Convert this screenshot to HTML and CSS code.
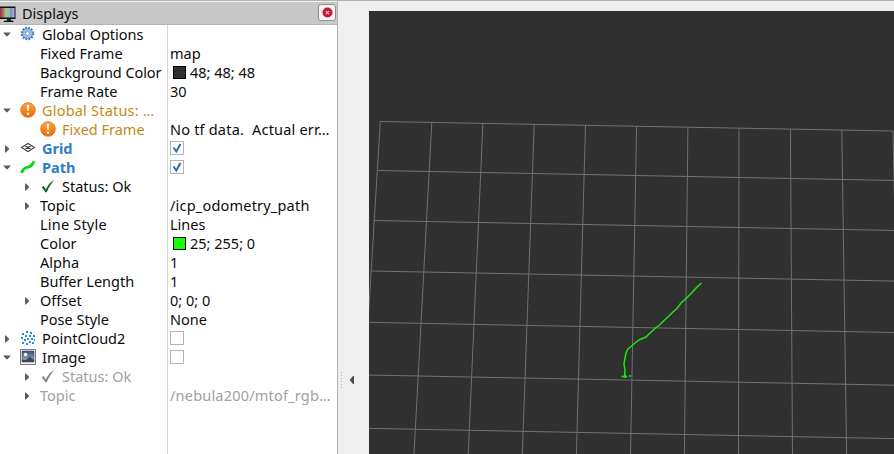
FILE: index.html
```html
<!DOCTYPE html>
<html lang="en">
<head>
<meta charset="utf-8">
<title>Displays</title>
<link rel="stylesheet" href="styles.css">
</head>
<body>
<svg class="defs" width="0" height="0">
  <defs>
    <linearGradient id="orange" x1="0" y1="0" x2="0" y2="1"><stop offset="0" stop-color="#ffa552"/><stop offset=".5" stop-color="#f58a20"/><stop offset="1" stop-color="#e8690b"/></linearGradient>
    <linearGradient id="red" x1="0" y1="0" x2="1" y2="0"><stop offset="0" stop-color="#8f3338"/><stop offset="1" stop-color="#c98a8c"/></linearGradient>
    <linearGradient id="blue" x1="0" y1="0" x2="1" y2="0"><stop offset="0" stop-color="#7d80d0"/><stop offset="1" stop-color="#b4b6ee"/></linearGradient>
    <linearGradient id="sky" x1="0" y1="0" x2="0" y2="1"><stop offset="0" stop-color="#364f80"/><stop offset="1" stop-color="#a2b6d8"/></linearGradient>
    <symbol id="down" viewBox="0 0 8 5"><path d="M.5.5h7v.6L4.500 4.200h-1L.5 1.100z" fill="#5c5c5c"/></symbol>
    <symbol id="right" viewBox="0 0 5 8"><path d="M0 .5h.8L4 3.500v1L.8 7.500H0z" fill="#5c5c5c"/></symbol>
    <symbol id="warn" viewBox="0 0 16 16"><circle cx="8" cy="8" r="7.300" fill="url(#orange)" stroke="#dc6b12" stroke-width=".8"/><path d="M6.900 3h2.200l-.4 6H7.300z" fill="#fff"/><circle cx="8" cy="11.700" r="1.200" fill="#fff"/></symbol>
    <symbol id="tick" viewBox="0 0 14 14"><path d="M.5 8.200 2.700 7l2.100 3.200C7 5.700 9.600 2.700 13.500.7 10 4.600 7.700 8.300 5.800 13.300H4.200C3.300 11.200 2 9.600.5 8.200z" fill="currentColor"/></symbol>
  </defs>
</svg>
<main class="window">
  <section class="panel">
    <header class="title">
      <svg class="monitor" width="16" height="17" viewBox="0 0 16 17"><path d="M0 .5h15.500v12.500H0z" fill="#111"/><path d="M0 2h5v9.500H0z" fill="url(#red)"/><path d="M5 2h5v9.500H5z" fill="#8ec793"/><path d="M10 2h4.500v9.500H10z" fill="url(#blue)"/><path d="M7 13h4v2H7z" fill="#333"/><path d="M5 14.500h7.500L14 16H3z" fill="#111"/></svg>
      <h1>Displays</h1>
      <button class="close" aria-label="Close"><svg width="11" height="11" viewBox="0 0 11 11"><circle cx="5.500" cy="5.500" r="5" fill="#c9162c"/><path d="m3.900 3.900 3.200 3.200m0-3.200L3.900 7.100" stroke="#f4cdd2" stroke-width="1.200"/></svg></button>
    </header>
    <div class="tree">
      <div class="names">
        <div class="row"><svg class="tog"><use href="#down" width="8" height="5" x="3" y="5"/></svg><svg class="ico lift" viewBox="0 0 16 16"><circle cx="7.500" cy="7.500" r="5.700" fill="none" stroke="#447bb9" stroke-width="2.100" stroke-dasharray="1.800 1.185"/><circle cx="7.500" cy="7.500" r="3.800" fill="none" stroke="#9dbde4" stroke-width="2.400"/><circle cx="7.500" cy="7.500" r="5" fill="none" stroke="#4a80bf" stroke-width=".8"/><circle cx="7.500" cy="7.500" r="2" fill="#fff" stroke="#5287c4" stroke-width=".9"/></svg><span>Global Options</span></div>
        <div class="row prop"><span>Fixed Frame</span></div>
        <div class="row prop"><span class="snug">Background Color</span></div>
        <div class="row prop"><span>Frame Rate</span></div>
        <div class="row warn"><svg class="tog"><use href="#down" width="8" height="5" x="3" y="5"/></svg><svg class="ico lift"><use href="#warn" width="16" height="16"/></svg><span class="airy">Global Status: …</span></div>
        <div class="row sub warn"><i class="tog"></i><svg class="ico lift"><use href="#warn" width="16" height="16"/></svg><span>Fixed Frame</span></div>
        <div class="row display"><svg class="tog"><use href="#right" width="5" height="8" x="5" y="4"/></svg><svg class="ico lift" viewBox="0 0 16 16"><path d="m1.500 7.500 6.500-4 6.500 4-6.500 4zM4.700 5.500l6.600 4M11.300 5.500l-6.600 4" fill="none" stroke="#444" stroke-width="1.100"/></svg><span>Grid</span></div>
        <div class="row display"><svg class="tog"><use href="#down" width="8" height="5" x="3" y="5"/></svg><svg class="ico lift" viewBox="0 0 16 16"><path d="M1.500 14C3 9.800 4.200 9 7 8.400s5.500-1.800 6.900-6.200" fill="none" stroke="#0bd51c" stroke-width="3"/></svg><span>Path</span></div>
        <div class="row sub"><svg class="tog"><use href="#right" width="5" height="8" x="5" y="4"/></svg><svg class="ico tick lift"><use href="#tick" width="14" height="14" x="1" y="1"/></svg><span>Status: Ok</span></div>
        <div class="row sub"><svg class="tog"><use href="#right" width="5" height="8" x="5" y="4"/></svg><span>Topic</span></div>
        <div class="row prop"><span class="airy">Line Style</span></div>
        <div class="row prop"><span>Color</span></div>
        <div class="row prop"><span>Alpha</span></div>
        <div class="row prop"><span>Buffer Length</span></div>
        <div class="row sub"><svg class="tog"><use href="#right" width="5" height="8" x="5" y="4"/></svg><span>Offset</span></div>
        <div class="row prop"><span>Pose Style</span></div>
        <div class="row"><svg class="tog"><use href="#right" width="5" height="8" x="5" y="4"/></svg><svg class="ico lift" viewBox="0 0 16 16"><path d="M6 1h2v2H6zM10 2h2v2h-2zM2 3h2v2H2zM5 5h2v2H5zM9 5h2v2H9zM13 5h2v2h-2zM1 7h2v2H1zM7 8h2v2H7zM11 8h2v2h-2zM4 9h2v2H4zM14 9h1v2h-1zM2 12h2v2H2zM6 13h2v2H6zM9 11h2v2H9zM12 12h2v2h-2z" fill="#1d91ea"/></svg><span>PointCloud2</span></div>
        <div class="row"><svg class="tog"><use href="#down" width="8" height="5" x="3" y="5"/></svg><svg class="ico lift" viewBox="0 0 16 16"><path d="M.5.5h15v15H.5z" fill="#f8f8f8" stroke="#777"/><path d="M2 2h12v11H2z" fill="url(#sky)" stroke="#36466a" stroke-width=".6"/><circle cx="5.500" cy="5.500" r="1.800" fill="#fffcd0"/><path d="M2 10.500 6 11l3.500-3.500L14 11v2H2z" fill="#3c4654"/></svg><span>Image</span></div>
        <div class="row sub off"><svg class="tog"><use href="#right" width="5" height="8" x="5" y="4"/></svg><svg class="ico tick lift"><use href="#tick" width="14" height="14" x="1" y="1"/></svg><span>Status: Ok</span></div>
        <div class="row sub off"><svg class="tog"><use href="#right" width="5" height="8" x="5" y="4"/></svg><span>Topic</span></div>
      </div>
      <div class="values">
        <div class="row"></div>
        <div class="row">map</div>
        <div class="row"><i class="swatch dark"></i><span>48; 48; 48</span></div>
        <div class="row">30</div>
        <div class="row"></div>
        <div class="row airy">No tf data.&nbsp; Actual err…</div>
        <div class="row"><i class="box"><svg width="12" height="12" viewBox="0 0 12 12"><path d="m2.500 5.500 2.800 4L9.500 2" fill="none" stroke="#2b66a8" stroke-width="1.900"/></svg></i></div>
        <div class="row"><i class="box"><svg width="12" height="12" viewBox="0 0 12 12"><path d="m2.500 5.500 2.800 4L9.500 2" fill="none" stroke="#2b66a8" stroke-width="1.900"/></svg></i></div>
        <div class="row"></div>
        <div class="row airy">/icp_odometry_path</div>
        <div class="row">Lines</div>
        <div class="row"><i class="swatch green"></i><span>25; 255; 0</span></div>
        <div class="row">1</div>
        <div class="row">1</div>
        <div class="row">0; 0; 0</div>
        <div class="row">None</div>
        <div class="row"><i class="box"></i></div>
        <div class="row"><i class="box"></i></div>
        <div class="row"></div>
        <div class="row off airy">/nebula200/mtof_rgb…</div>
      </div>
    </div>
  </section>
  <div class="splitter"><svg width="31" height="18" viewBox="0 0 31 18"><path d="M3.500 1v16" stroke="#aaa" stroke-dasharray="1 2"/><path d="M16 5v8h-1l-3-3.400V8.400L15 5z" fill="#4c4c4c"/></svg></div>
  <svg class="view" viewBox="369 11 525 443">
    <g class="grid">
      <path d="M380.300 121.500 893 131M377.500 170.500 896 180.500M374.400 220.500 897 230.500M371.300 271 899 281.200M367 322.300 894 332.500M367 375 894 385.200M367 428.300 894 438.600"/>
      <path d="M380.300 121.500 360 454M431.800 122.500 414 454M482.900 123.400 468.200 454M534.200 124.400 522.300 454M585.500 125.300 576.400 454M636.600 126.200 630.500 454M687.900 127.200 684.400 454M739 128.200 738.500 454M790.400 129.100 792.500 454M841.800 130 846.600 454M893 131 900 454"/>
    </g>
    <path class="track" d="M701.500 283 697 287 692 292.500 687 297.500 681 303 677 308.500 673 312 669 316 664 320.500 660 324.500 655 328.500 650 333 646 337 640 339.500 635 343 631 346.500 628 349 626 353 625 358 624 364 625 370 624.500 376.500M621.500 376.500h6M629 376h2M625 374v4"/>
  </svg>
</main>
</body>
</html>
```
FILE: styles.css
```css
* { box-sizing: border-box; }
body { margin: 0; background: #efefef; color: #0c0c0c; font: 14.500px/19px "Noto Sans", sans-serif; }
.defs { position: absolute; }
.window { display: flex; height: 454px; overflow: hidden; border-top: 1px solid #b4b4b4; }
.panel { display: flex; flex-direction: column; width: 338px; border-right: 1px solid #b4b4b4; padding-top: 1px; }
.title { display: flex; align-items: center; height: 23px; background: #c8c8c8; border-bottom: 1px solid #b4b4b4; }
.monitor { margin-top: 3px; }
.title h1 { margin: 0 0 0 6px; font-size: 14.500px; font-weight: 400; flex: 1; }
.close { display: flex; align-items: center; justify-content: center; width: 18px; height: 17px; margin: 0 1px 1px 0; padding: 0; border: 1px solid #8f8f8f; border-radius: 3px; background: #f5f5f5; }
.tree { display: flex; flex: 1; background: #fff; }
.names { width: 168px; border-right: 1px solid #d6d6d6; }
.values { flex: 1; padding-left: 2px; }
.row { display: flex; align-items: center; height: 19px; white-space: nowrap; }
.tog { width: 14px; height: 16px; flex: none; }
.ico { width: 16px; height: 16px; margin: 0 6px; flex: none; }
.lift { margin-bottom: 2px; }
.prop { padding-left: 40px; }
.sub { padding-left: 20px; }
.sub .tog + span { margin-left: 6px; }
.snug { letter-spacing: -.08px; }
.airy { letter-spacing: .2px; }
.warn { color: #c48a16; }
.display { color: #2d7bcb; font-weight: 700; }
.tick { color: #18681f; }
.off { color: #a0a0a0; }
.off .tick { color: #858585; }
.swatch { width: 13px; height: 13px; margin: 0 4px 0 3px; border: 1px solid #000; }
.dark { background: #303030; }
.green { background: #19ff00; }
.box { width: 14px; height: 14px; margin-bottom: 2px; border: 1px solid #b4b4b4; background: #fff; }
.box svg { display: block; }
.splitter { display: flex; width: 31px; padding-top: 370px; }
.view { width: 525px; height: 443px; margin-top: 10px; background: #303030; }
.grid { fill: none; stroke: #707070; stroke-width: 1; }
.track { fill: none; stroke: #20e80c; stroke-width: 1.500; }
```
